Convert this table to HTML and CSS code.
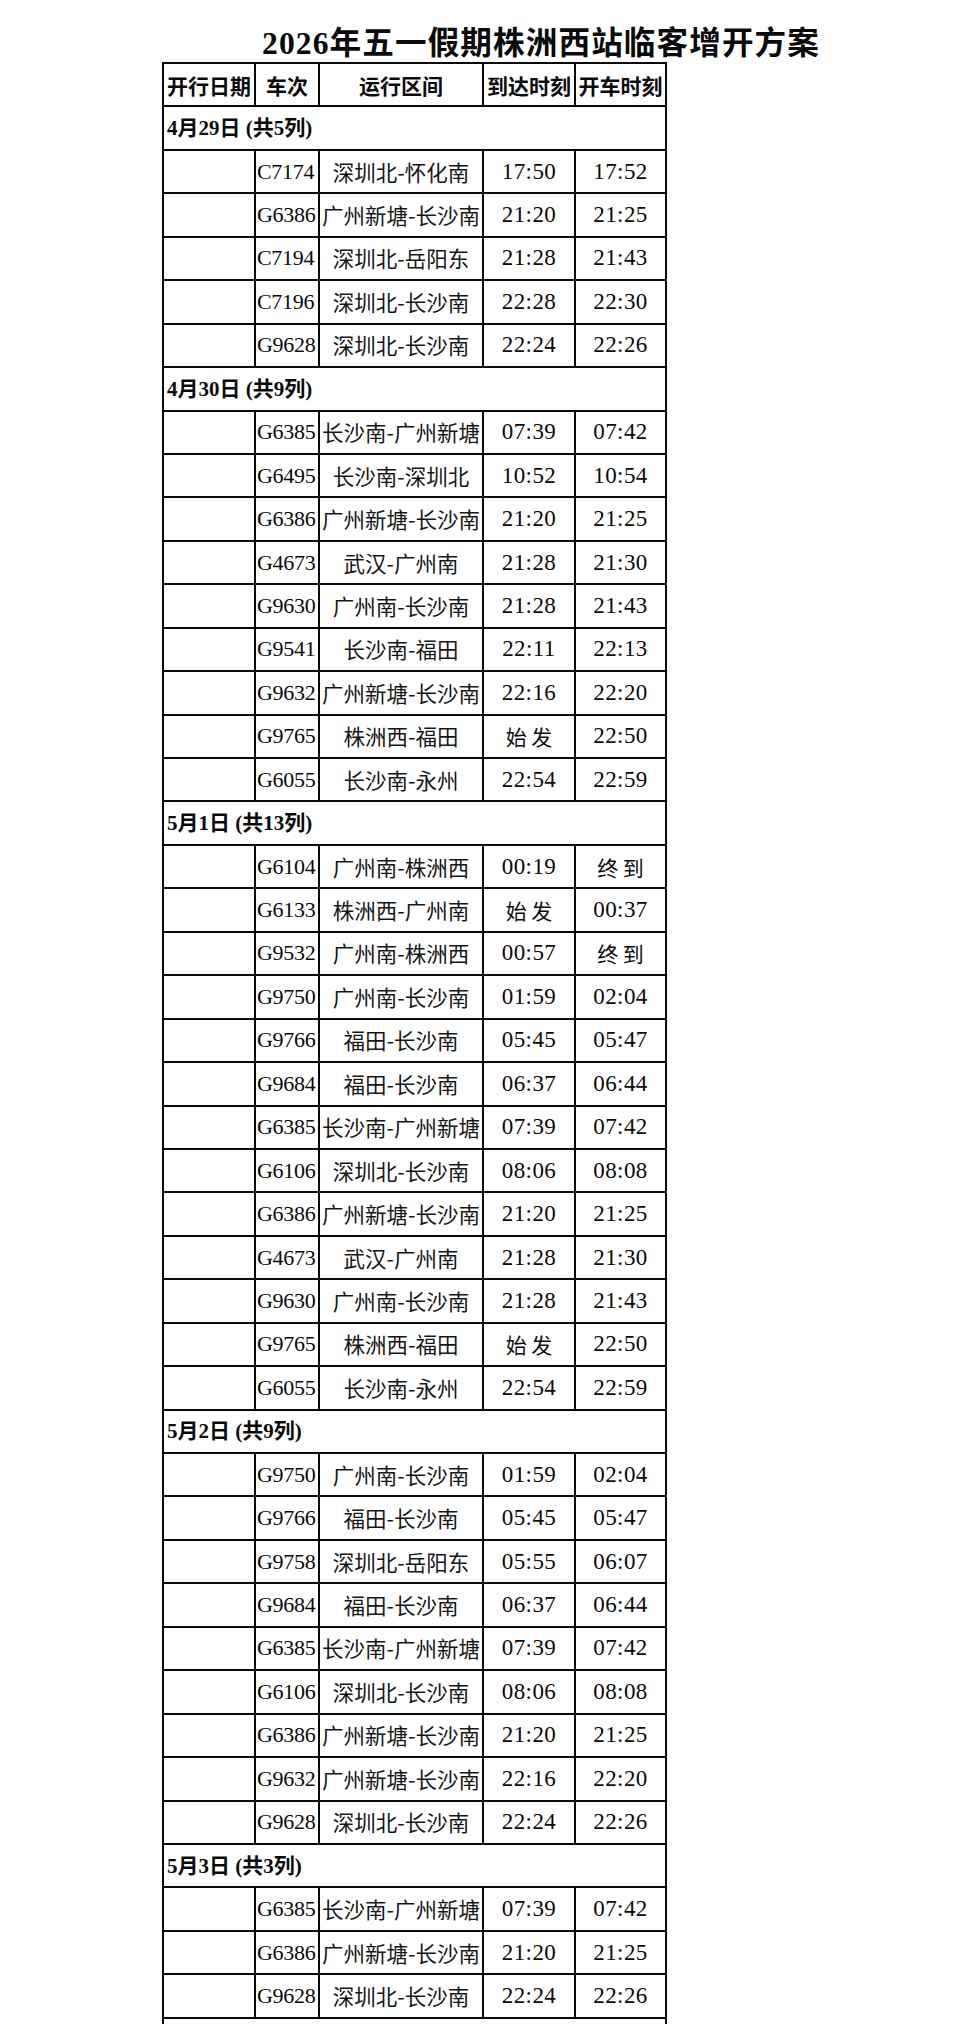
FILE: index.html
```html
<!DOCTYPE html>
<html lang="zh-CN">
<head>
<meta charset="utf-8">
<title>2026年五一假期株洲西站临客增开方案</title>
<link rel="stylesheet" href="styles.css">
</head>
<body>
<div class="page">
  <h1 class="title">2026年五一假期株洲西站临客增开方案</h1>
  <table class="plan">
    <colgroup>
      <col class="c-date"><col class="c-train"><col class="c-route"><col class="c-arr"><col class="c-dep">
    </colgroup>
    <thead>
      <tr class="head"><th>开行日期</th><th>车次</th><th>运行区间</th><th>到达时刻</th><th>开车时刻</th></tr>
    </thead>
    <tbody>
      <tr class="group"><td colspan="5">4月29日 (共5列)</td></tr>
      <tr><td></td><td class="tn">C7174</td><td class="rt">深圳北-怀化南</td><td class="tm">17:50</td><td class="tm">17:52</td></tr>
      <tr><td></td><td class="tn">G6386</td><td class="rt">广州新塘-长沙南</td><td class="tm">21:20</td><td class="tm">21:25</td></tr>
      <tr><td></td><td class="tn">C7194</td><td class="rt">深圳北-岳阳东</td><td class="tm">21:28</td><td class="tm">21:43</td></tr>
      <tr><td></td><td class="tn">C7196</td><td class="rt">深圳北-长沙南</td><td class="tm">22:28</td><td class="tm">22:30</td></tr>
      <tr><td></td><td class="tn">G9628</td><td class="rt">深圳北-长沙南</td><td class="tm">22:24</td><td class="tm">22:26</td></tr>

      <tr class="group"><td colspan="5">4月30日 (共9列)</td></tr>
      <tr><td></td><td class="tn">G6385</td><td class="rt">长沙南-广州新塘</td><td class="tm">07:39</td><td class="tm">07:42</td></tr>
      <tr><td></td><td class="tn">G6495</td><td class="rt">长沙南-深圳北</td><td class="tm">10:52</td><td class="tm">10:54</td></tr>
      <tr><td></td><td class="tn">G6386</td><td class="rt">广州新塘-长沙南</td><td class="tm">21:20</td><td class="tm">21:25</td></tr>
      <tr><td></td><td class="tn">G4673</td><td class="rt">武汉-广州南</td><td class="tm">21:28</td><td class="tm">21:30</td></tr>
      <tr><td></td><td class="tn">G9630</td><td class="rt">广州南-长沙南</td><td class="tm">21:28</td><td class="tm">21:43</td></tr>
      <tr><td></td><td class="tn">G9541</td><td class="rt">长沙南-福田</td><td class="tm">22:11</td><td class="tm">22:13</td></tr>
      <tr><td></td><td class="tn">G9632</td><td class="rt">广州新塘-长沙南</td><td class="tm">22:16</td><td class="tm">22:20</td></tr>
      <tr><td></td><td class="tn">G9765</td><td class="rt">株洲西-福田</td><td class="tm cj">始 发</td><td class="tm">22:50</td></tr>
      <tr><td></td><td class="tn">G6055</td><td class="rt">长沙南-永州</td><td class="tm">22:54</td><td class="tm">22:59</td></tr>

      <tr class="group"><td colspan="5">5月1日 (共13列)</td></tr>
      <tr><td></td><td class="tn">G6104</td><td class="rt">广州南-株洲西</td><td class="tm">00:19</td><td class="tm cj">终 到</td></tr>
      <tr><td></td><td class="tn">G6133</td><td class="rt">株洲西-广州南</td><td class="tm cj">始 发</td><td class="tm">00:37</td></tr>
      <tr><td></td><td class="tn">G9532</td><td class="rt">广州南-株洲西</td><td class="tm">00:57</td><td class="tm cj">终 到</td></tr>
      <tr><td></td><td class="tn">G9750</td><td class="rt">广州南-长沙南</td><td class="tm">01:59</td><td class="tm">02:04</td></tr>
      <tr><td></td><td class="tn">G9766</td><td class="rt">福田-长沙南</td><td class="tm">05:45</td><td class="tm">05:47</td></tr>
      <tr><td></td><td class="tn">G9684</td><td class="rt">福田-长沙南</td><td class="tm">06:37</td><td class="tm">06:44</td></tr>
      <tr><td></td><td class="tn">G6385</td><td class="rt">长沙南-广州新塘</td><td class="tm">07:39</td><td class="tm">07:42</td></tr>
      <tr><td></td><td class="tn">G6106</td><td class="rt">深圳北-长沙南</td><td class="tm">08:06</td><td class="tm">08:08</td></tr>
      <tr><td></td><td class="tn">G6386</td><td class="rt">广州新塘-长沙南</td><td class="tm">21:20</td><td class="tm">21:25</td></tr>
      <tr><td></td><td class="tn">G4673</td><td class="rt">武汉-广州南</td><td class="tm">21:28</td><td class="tm">21:30</td></tr>
      <tr><td></td><td class="tn">G9630</td><td class="rt">广州南-长沙南</td><td class="tm">21:28</td><td class="tm">21:43</td></tr>
      <tr><td></td><td class="tn">G9765</td><td class="rt">株洲西-福田</td><td class="tm cj">始 发</td><td class="tm">22:50</td></tr>
      <tr><td></td><td class="tn">G6055</td><td class="rt">长沙南-永州</td><td class="tm">22:54</td><td class="tm">22:59</td></tr>

      <tr class="group"><td colspan="5">5月2日 (共9列)</td></tr>
      <tr><td></td><td class="tn">G9750</td><td class="rt">广州南-长沙南</td><td class="tm">01:59</td><td class="tm">02:04</td></tr>
      <tr><td></td><td class="tn">G9766</td><td class="rt">福田-长沙南</td><td class="tm">05:45</td><td class="tm">05:47</td></tr>
      <tr><td></td><td class="tn">G9758</td><td class="rt">深圳北-岳阳东</td><td class="tm">05:55</td><td class="tm">06:07</td></tr>
      <tr><td></td><td class="tn">G9684</td><td class="rt">福田-长沙南</td><td class="tm">06:37</td><td class="tm">06:44</td></tr>
      <tr><td></td><td class="tn">G6385</td><td class="rt">长沙南-广州新塘</td><td class="tm">07:39</td><td class="tm">07:42</td></tr>
      <tr><td></td><td class="tn">G6106</td><td class="rt">深圳北-长沙南</td><td class="tm">08:06</td><td class="tm">08:08</td></tr>
      <tr><td></td><td class="tn">G6386</td><td class="rt">广州新塘-长沙南</td><td class="tm">21:20</td><td class="tm">21:25</td></tr>
      <tr><td></td><td class="tn">G9632</td><td class="rt">广州新塘-长沙南</td><td class="tm">22:16</td><td class="tm">22:20</td></tr>
      <tr><td></td><td class="tn">G9628</td><td class="rt">深圳北-长沙南</td><td class="tm">22:24</td><td class="tm">22:26</td></tr>

      <tr class="group"><td colspan="5">5月3日 (共3列)</td></tr>
      <tr><td></td><td class="tn">G6385</td><td class="rt">长沙南-广州新塘</td><td class="tm">07:39</td><td class="tm">07:42</td></tr>
      <tr><td></td><td class="tn">G6386</td><td class="rt">广州新塘-长沙南</td><td class="tm">21:20</td><td class="tm">21:25</td></tr>
      <tr><td></td><td class="tn">G9628</td><td class="rt">深圳北-长沙南</td><td class="tm">22:24</td><td class="tm">22:26</td></tr>

      <tr class="note"><td colspan="5"></td></tr>
    </tbody>
  </table>
</div>
</body>
</html>
```
FILE: styles.css
```css
html, body {
  margin: 0;
  padding: 0;
  background: #ffffff;
}

.page {
  height: 2024px;
  overflow: hidden;
  padding-left: 162px;
  font-family: "Liberation Serif", "Noto Sans CJK SC", serif;
  color: #0a0a0a;
}

.title {
  margin: 26px 0 0 100px;
  font-size: 31.6px;
  line-height: 36px;
  font-weight: 700;
  letter-spacing: 1.1px;
  white-space: nowrap;
}

.plan {
  border-collapse: collapse;
  table-layout: fixed;
  width: 505px;
}

.c-date { width: 92px; }
.c-train { width: 64px; }
.c-route { width: 164px; }
.c-arr { width: 92px; }
.c-dep { width: 91px; }

.plan tr {
  height: 43.45px;
}

.plan th,
.plan td {
  border: 2px solid #0a0a0a;
  padding: 0;
  vertical-align: middle;
  white-space: nowrap;
  overflow: hidden;
}

.head th {
  font-family: "Noto Sans CJK SC", sans-serif;
  font-weight: 700;
  font-size: 21px;
  line-height: 26px;
  text-align: center;
  letter-spacing: 0;
}

.group td {
  font-weight: 700;
  font-size: 21px;
  line-height: 26px;
  text-align: left;
  padding-left: 3px;
}

.tn {
  font-size: 22px;
  line-height: 26px;
  text-align: left;
  padding-left: 1px !important;
  letter-spacing: -0.3px;
}

.rt {
  font-family: "Noto Sans CJK SC", sans-serif;
  font-size: 21.5px;
  line-height: 26px;
  text-align: center;
  color: #161616;
}

.tm {
  font-size: 23px;
  line-height: 26px;
  text-align: center;
  letter-spacing: 0.4px;
}

.tm.cj {
  font-family: "Noto Sans CJK SC", sans-serif;
  font-size: 21px;
  letter-spacing: 0;
}
```
